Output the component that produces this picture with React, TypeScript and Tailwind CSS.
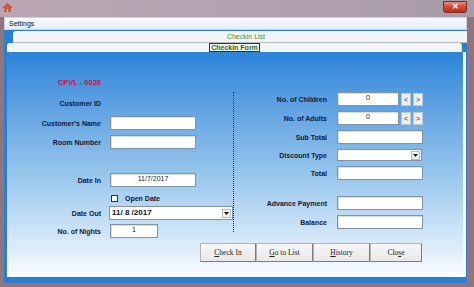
import React from 'react';

const FONT = { fontFamily: '"Liberation Sans", Arial, sans-serif' };
const SERIF = { fontFamily: '"Liberation Serif", "Times New Roman", serif' };

function Label({ children, w }: { children: React.ReactNode; w: string }) {
  return (
    <div className={`${w} shrink-0 text-right text-[7px] font-bold leading-none text-[#14183a]`}>{children}</div>
  );
}

function Box({ w, value, h = 'h-[14px]' }: { w: string; value?: string; h?: string }) {
  return (
    <div
      className={`${w} ${h} flex items-start justify-center border border-[#7f93a8] bg-white pt-[1px] text-[7px] leading-none text-[#222] shadow-[inset_1px_1px_0_#d8dde3]`}
    >
      {value}
    </div>
  );
}

function Arrow() {
  return (
    <div className="flex h-[9px] w-[9px] items-center justify-center border border-[#b8b8b8] bg-[#f2f2f2]">
      <svg width="5" height="3" viewBox="0 0 5 3">
        <path d="M0 0h5L2.5 3z" fill="#111" />
      </svg>
    </div>
  );
}

function SpinBtn({ ch }: { ch: string }) {
  return (
    <div className="flex h-[13px] w-[10px] items-center justify-center border border-[#c2c8d0] bg-[#eceef0] text-[7px] leading-none text-[#333]">
      {ch}
    </div>
  );
}

function Btn({ w, pre, u, post }: { w: string; pre: string; u: string; post: string }) {
  return (
    <div
      className={`${w} flex h-[19px] items-center justify-center border border-[#b4b4b4] border-b-[#7c7c7c] border-r-[#7c7c7c] bg-linear-to-b from-[#f7f7f7] to-[#e8e8e8] text-[7.5px] leading-none text-[#222]`}
      style={SERIF}
    >
      {pre}
      <span className="underline">{u}</span>
      {post}
    </div>
  );
}

export default function App() {
  return (
    <div className="flex h-[287px] w-[474px] flex-col overflow-hidden bg-[#8e767c]" style={FONT}>
      {/* title bar */}
      <div className="flex h-[17px] shrink-0 items-start justify-between bg-linear-to-r from-[#b9a6b2] via-[#b3a3b0] to-[#a89aa6] pl-[3px] pr-[7px]">
        <svg width="9" height="9" viewBox="0 0 9 9" className="mt-[3px]">
          <path d="M4.5 0.5L0.3 4.4h1.4V8.5h2V6h1.6v2.5h2V4.4h1.4z" fill="#e0553a" stroke="#9a2a18" strokeWidth="0.5" />
          <rect x="3.8" y="6" width="1.4" height="2.5" fill="#f4e0b0" />
        </svg>
        <div className="mt-[1px] flex h-[12px] w-[24px] items-center justify-center rounded-b-[3px] border border-[#7a2a24] bg-linear-to-b from-[#e8907e] via-[#cc4a38] to-[#b8301e] text-[8px] font-bold leading-none text-white">
          ✕
        </div>
      </div>

      <div className="flex flex-1 pb-[4px] pl-[4px] pr-[7px]">
        <div className="flex flex-1 flex-col">
          {/* menu */}
          <div className="flex h-[13px] shrink-0 items-center border border-[#c9d3e0] bg-linear-to-b from-[#f7f9fc] to-[#e6ecf5] pl-[4px] text-[7px] leading-none text-[#111]">
            Settings
          </div>

          {/* blue tab control */}
          <div className="flex flex-1 flex-col bg-[#2c7ed2] pb-[6px]">
            <div className="ml-[9px] mt-[1px] flex h-[12px] shrink-0 items-center justify-center rounded-tl-[3px] border-b border-[#b8bcc4] bg-[#f3f4f6] pl-[12px] text-[7px] leading-none text-[#2f9a3c]">
              Checkin List
            </div>
            <div className="ml-[3px] mr-[5px] flex h-[9px] shrink-0 items-center justify-center rounded-tl-[3px] rounded-tr-[3px] bg-[#f3f4f6]">
              <div className="flex h-[9px] items-center border border-[#333] px-[1px] text-[7px] font-bold leading-none text-[#1b6e1f]">
                Checkin Form
              </div>
            </div>

            {/* form panel */}
            <div className="ml-[3px] mr-[1px] flex flex-1 flex-col border-r-[3px] border-[#f4f8fc] bg-linear-to-b from-[#2a84d8] via-[#98c6ec] via-55% to-[#fafcff] pt-[24px]">
              <div className="flex items-start">
                {/* left column */}
                <div className="flex w-[226px] shrink-0 flex-col">
                  <div className="flex h-[14px] items-center">
                    <div className="w-[94px] text-right text-[7.5px] font-bold leading-none text-[#c0173f]">CPVL - 0026</div>
                  </div>
                  <div className="mt-[6px] flex h-[14px] items-center">
                    <Label w="w-[94px]">Customer ID</Label>
                  </div>
                  <div className="mt-[6px] flex h-[14px] items-center gap-[9px]">
                    <Label w="w-[94px]">Customer&apos;s Name</Label>
                    <Box w="w-[86px]" />
                  </div>
                  <div className="mt-[5px] flex h-[14px] items-center gap-[9px]">
                    <Label w="w-[94px]">Room Number</Label>
                    <Box w="w-[86px]" />
                  </div>
                  <div className="mt-[24px] flex h-[14px] items-center gap-[9px]">
                    <Label w="w-[94px]">Date In</Label>
                    <Box w="w-[86px]" value="11/7/2017" />
                  </div>
                  <div className="mt-[6px] flex h-[10px] items-center">
                    <div className="ml-[104px] h-[7px] w-[7px] border border-[#333] bg-white" />
                    <div className="ml-[7px] text-[7px] font-bold leading-none text-[#14183a]">Open Date</div>
                  </div>
                  <div className="mt-[3px] flex h-[14px] items-center gap-[8px]">
                    <Label w="w-[94px]">Date Out</Label>
                    <div className="flex h-[14px] w-[124px] items-center justify-between border border-[#7f93a8] bg-white pl-[2px] pr-[1px]">
                      <span className="text-[8px] font-bold leading-none text-[#111]">11/ 8 /2017</span>
                      <Arrow />
                    </div>
                  </div>
                  <div className="mt-[4px] flex h-[14px] items-center gap-[9px]">
                    <Label w="w-[94px]">No. of Nights</Label>
                    <Box w="w-[48px]" value="1" />
                  </div>
                </div>

                {/* divider */}
                <div className="mt-[16px] h-[140px] w-0 shrink-0 border-l border-dotted border-[#1a2450]" />

                {/* right column */}
                <div className="flex flex-col pt-[16px]">
                  <div className="flex h-[14px] items-center">
                    <Label w="w-[93px]">No. of Children</Label>
                    <div className="ml-[10px]"><Box w="w-[62px]" value="0" /></div>
                    <div className="ml-[2px] flex gap-[2px]"><SpinBtn ch="<" /><SpinBtn ch=">" /></div>
                  </div>
                  <div className="mt-[5px] flex h-[14px] items-center">
                    <Label w="w-[93px]">No. of Adults</Label>
                    <div className="ml-[10px]"><Box w="w-[62px]" value="0" /></div>
                    <div className="ml-[2px] flex gap-[2px]"><SpinBtn ch="<" /><SpinBtn ch=">" /></div>
                  </div>
                  <div className="mt-[5px] flex h-[14px] items-center">
                    <Label w="w-[93px]">Sub Total</Label>
                    <div className="ml-[10px]"><Box w="w-[86px]" /></div>
                  </div>
                  <div className="mt-[5px] flex h-[12px] items-center">
                    <Label w="w-[93px]">Discount Type</Label>
                    <div className="ml-[10px] flex h-[12px] w-[85px] items-center justify-end border border-[#7f93a8] bg-white pr-[1px]">
                      <Arrow />
                    </div>
                  </div>
                  <div className="mt-[5px] flex h-[14px] items-center">
                    <Label w="w-[93px]">Total</Label>
                    <div className="ml-[10px]"><Box w="w-[86px]" /></div>
                  </div>
                  <div className="mt-[16px] flex h-[14px] items-center">
                    <Label w="w-[93px]">Advance Payment</Label>
                    <div className="ml-[10px]"><Box w="w-[86px]" /></div>
                  </div>
                  <div className="mt-[5px] flex h-[14px] items-center">
                    <Label w="w-[93px]">Balance</Label>
                    <div className="ml-[10px]"><Box w="w-[86px]" /></div>
                  </div>
                </div>
              </div>

              {/* buttons */}
              <div className="ml-[193px] mt-[5px] flex">
                <Btn w="w-[56px]" pre="" u="C" post="heck In" />
                <Btn w="w-[57px]" pre="" u="G" post="o to List" />
                <Btn w="w-[57px]" pre="" u="H" post="istory" />
                <Btn w="w-[52px]" pre="Clo" u="s" post="e" />
              </div>
            </div>
          </div>
        </div>
      </div>
    </div>
  );
}
